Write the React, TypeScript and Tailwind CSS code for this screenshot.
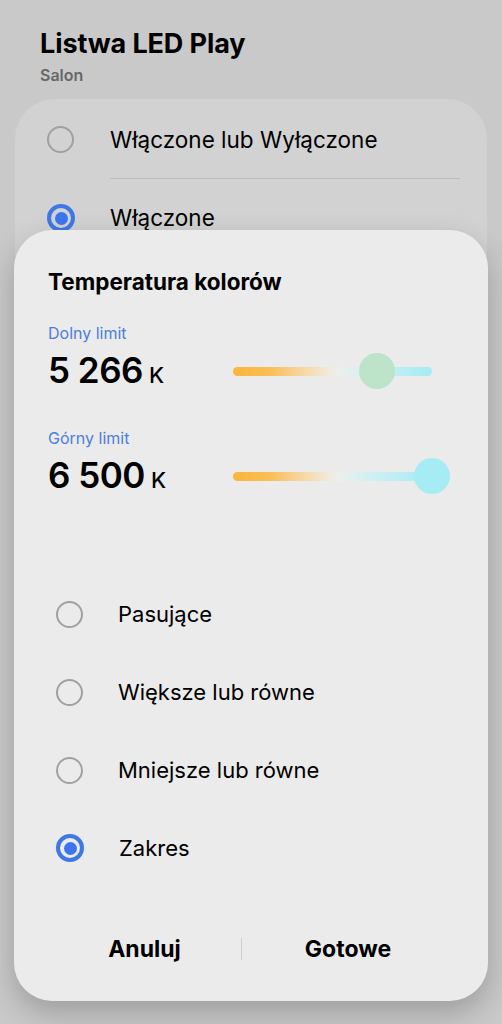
import React from 'react';

const FONT = 'font-["Inter","Roboto","Noto_Sans",sans-serif]';

const Radio: React.FC<{ checked?: boolean }> = ({ checked }) =>
  checked ? (
    <div className="w-[28px] h-[28px] shrink-0 rounded-full border-[4px] border-[#3f78e6] flex items-center justify-center">
      <div className="w-[13px] h-[13px] rounded-full bg-[#3b76ee]" />
    </div>
  ) : (
    <div className="w-[27px] h-[27px] shrink-0 rounded-full border-2 border-[#a0a0a0]" />
  );

const TempSlider: React.FC<{ value: number; min: number; max: number; thumb: string }> = ({ value, min, max, thumb }) => {
  const pct = ((value - min) / (max - min)) * 100;
  return (
    <div className="relative w-[199px] h-[36px] flex items-center">
      <div className="w-full h-[9px] rounded-full bg-[linear-gradient(to_right,#fbb53c_0%,#fbbd55_18%,#f6dcae_38%,#eeeeec_52%,#d6f0f2_66%,#a4ebf4_100%)]" />
      <div
        className={`absolute top-0 w-[36px] h-[36px] -ml-[18px] rounded-full ${thumb}`}
        style={{ left: `${pct}%` }}
      />
    </div>
  );
};

export default function App() {
  const limits = [
    { label: 'Dolny limit', value: 5266, text: '5 266', thumb: 'bg-[#bde3c8]' },
    { label: 'Górny limit', value: 6500, text: '6 500', thumb: 'bg-[#a6ecf4]' },
  ];
  const options = [
    { label: 'Pasujące', checked: false },
    { label: 'Większe lub równe', checked: false },
    { label: 'Mniejsze lub równe', checked: false },
    { label: 'Zakres', checked: true },
  ];

  return (
    <div className={`${FONT} relative w-full h-[1024px] overflow-hidden bg-[#c9c9c9] text-black`}>
      {/* Header */}
      <header className="px-10 pt-[27px]">
        <h1 className="text-[27px] leading-[34px] font-bold tracking-[-0.1px]">Listwa LED Play</h1>
        <p className="text-[16px] leading-[20px] font-semibold text-[#676767] mt-[4px]">Salon</p>
      </header>

      {/* Card behind the dialog */}
      <section className="mx-[15px] mt-[14px] rounded-[40px] bg-[#d2d2d2] pl-[32px] pr-[27px] pt-[2px] h-[400px]">
        <div className="flex items-center gap-[36px] h-[77px]">
          <Radio />
          <span className="text-[22.5px]">Włączone lub Wyłączone</span>
        </div>
        <div className="ml-[63px] h-px bg-[#bcbcbc]" />
        <div className="flex items-center gap-[35px] h-[78px]">
          <Radio checked />
          <span className="text-[22.5px]">Włączone</span>
        </div>
      </section>

      {/* Dialog */}
      <div className="absolute left-[14px] right-[14px] top-[230px] bottom-[23px] rounded-[38px] bg-[#ebebeb] shadow-[0_12px_30px_rgba(0,0,0,0.22)] flex flex-col">
        <div className="pl-[34px] pr-[37px] pt-[38px]">
          <h2 className="text-[22.5px] leading-[28px] font-bold">Temperatura kolorów</h2>

          {limits.map((l, i) => (
            <div key={l.label} className={i === 0 ? 'mt-[27px]' : 'mt-[37px]'}>
              <p className="text-[16px] leading-[20px] text-[#4d7edb]">{l.label}</p>
              <div className="flex items-center justify-between mt-[8px] h-[40px]">
                <div className="flex items-baseline">
                  <span className="text-[35px] leading-[40px] font-semibold tracking-[-0.5px]">{l.text}</span>
                  <span className="text-[22px] font-medium ml-[6px]">K</span>
                </div>
                <div className="mr-[19px]">
                  <TempSlider value={l.value} min={2000} max={6500} thumb={l.thumb} />
                </div>
              </div>
            </div>
          ))}
        </div>

        <div className="pl-[42px] mt-[79px] flex flex-col">
          {options.map((o) => (
            <div key={o.label} className="flex items-center gap-[35px] h-[78px]">
              <Radio checked={o.checked} />
              <span className="text-[22px]">{o.label}</span>
            </div>
          ))}
        </div>

        <div className="mt-auto mb-[37px] px-[34px] flex items-center h-[30px]">
          <button className="w-[193px] text-[23px] font-bold">Anuluj</button>
          <div className="w-px h-[22px] bg-[#cfcfcf]" />
          <button className="flex-1 text-[23px] font-bold">Gotowe</button>
        </div>
      </div>
    </div>
  );
}
